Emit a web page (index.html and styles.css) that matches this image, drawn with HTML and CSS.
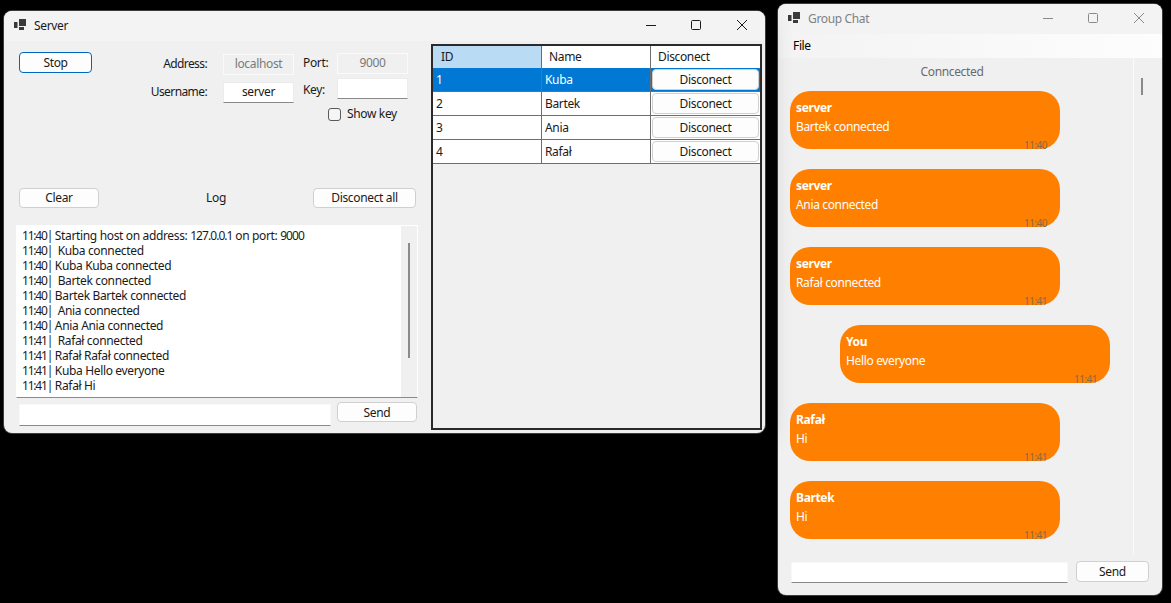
FILE: index.html
```html
<!DOCTYPE html>
<html>
<head>
	<title>Server / Group Chat</title>
	<meta charset="utf-8">
	<link rel="stylesheet" href="styles.css">
</head>

<body>

<svg class="defs" width="0" height="0">
	<symbol id="app-icon" viewBox="0 0 12 12">
		<rect x="0" y="3" width="3.5" height="6" />
		<rect x="5" y="0" width="7" height="7" />
		<rect x="5" y="8" width="5" height="3" />
	</symbol>
</svg>

<div class="window server">
	<div class="titlebar">
		<svg class="app-icon"><use href="#app-icon"></use></svg>
		<span class="title">Server</span>
		<div class="caption">
			<svg viewBox="0 0 46 30"><path d="M19 14.5h10" /></svg>
			<svg viewBox="0 0 46 30"><rect x="18.5" y="9.5" width="9" height="9" rx="1" /></svg>
			<svg viewBox="0 0 46 30"><path d="M18 9l10 10M28 9l-10 10" /></svg>
		</div>
	</div>
	<div class="server-body">
		<div class="left">
			<div class="top">
				<button class="btn btn-stop">Stop</button>
				<div class="labels">
					<label class="address-label">Address:</label>
					<label class="username-label">Username:</label>
				</div>
				<div class="inputs">
					<div class="input disabled">localhost</div>
					<div class="input server-name">server</div>
				</div>
				<div class="labels-2">
					<label>Port:</label>
					<label class="key-label">Key:</label>
				</div>
				<div class="inputs inputs-2">
					<div class="input disabled">9000</div>
					<div class="input key"></div>
					<div class="show-key"><span class="checkbox"></span>Show key</div>
				</div>
			</div>
			<div class="log-head">
				<button class="btn btn-clear">Clear</button>
				<span class="log-title">Log</span>
				<button class="btn btn-all">Disconect all</button>
			</div>
			<div class="log">
				<div class="log-text">
					<div><span class="stamp">11:40|</span> Starting host on address: <span class="num">127.0.0.1</span> on port: <span class="num">9000</span></div>
					<div><span class="stamp">11:40|</span>&nbsp; Kuba connected</div>
					<div><span class="stamp">11:40|</span> Kuba Kuba connected</div>
					<div><span class="stamp">11:40|</span>&nbsp; Bartek connected</div>
					<div><span class="stamp">11:40|</span> Bartek Bartek connected</div>
					<div><span class="stamp">11:40|</span>&nbsp; Ania connected</div>
					<div><span class="stamp">11:40|</span> Ania Ania connected</div>
					<div><span class="stamp">11:41|</span>&nbsp; Rafał connected</div>
					<div><span class="stamp">11:41|</span> Rafał Rafał connected</div>
					<div><span class="stamp">11:41|</span> Kuba Hello everyone</div>
					<div><span class="stamp">11:41|</span> Rafał Hi</div>
				</div>
				<div class="log-scroll"><span class="log-thumb"></span></div>
			</div>
			<div class="send-row">
				<div class="input send-input"></div>
				<button class="btn btn-send">Send</button>
			</div>
		</div>
		<div class="grid-wrap">
			<div class="grid">
				<div class="cell head active">ID</div>
				<div class="cell head">Name</div>
				<div class="cell head last">Disconect</div>

				<div class="cell selected">1</div>
				<div class="cell selected">Kuba</div>
				<div class="cell selected action"><button class="btn btn-row">Disconect</button></div>

				<div class="cell">2</div>
				<div class="cell">Bartek</div>
				<div class="cell action"><button class="btn btn-row">Disconect</button></div>

				<div class="cell">3</div>
				<div class="cell">Ania</div>
				<div class="cell action"><button class="btn btn-row">Disconect</button></div>

				<div class="cell">4</div>
				<div class="cell">Rafał</div>
				<div class="cell action"><button class="btn btn-row">Disconect</button></div>
			</div>
		</div>
	</div>
</div>

<div class="window chat">
	<div class="titlebar">
		<svg class="app-icon"><use href="#app-icon"></use></svg>
		<span class="title">Group Chat</span>
		<div class="caption">
			<svg viewBox="0 0 46 30"><path d="M19 14.5h10" /></svg>
			<svg viewBox="0 0 46 30"><rect x="18.5" y="9.5" width="9" height="9" rx="1" /></svg>
			<svg viewBox="0 0 46 30"><path d="M18 9l10 10M28 9l-10 10" /></svg>
		</div>
	</div>
	<div class="menubar">File</div>
	<div class="chat-main">
		<div class="messages">
			<div class="status">Conncected</div>
			<div class="bubble">
				<b>server</b>
				<span>Bartek connected</span>
				<time>11:40</time>
			</div>
			<div class="bubble">
				<b>server</b>
				<span>Ania connected</span>
				<time>11:40</time>
			</div>
			<div class="bubble">
				<b>server</b>
				<span>Rafał connected</span>
				<time>11:41</time>
			</div>
			<div class="bubble mine">
				<b>You</b>
				<span>Hello everyone</span>
				<time>11:41</time>
			</div>
			<div class="bubble">
				<b>Rafał</b>
				<span>Hi</span>
				<time>11:41</time>
			</div>
			<div class="bubble">
				<b>Bartek</b>
				<span>Hi</span>
				<time>11:41</time>
			</div>
		</div>
		<div class="chat-scroll"><span class="chat-thumb"></span></div>
	</div>
	<div class="chat-send">
		<div class="input chat-input"></div>
		<button class="btn btn-chat-send">Send</button>
	</div>
</div>

</body>
</html>
```

FILE: styles.css
```css
html, body {
	margin: 0;
	height: 100%;
	background: #000;
	overflow: hidden;
}
body {
	position: relative;
	font: 12px "Noto Sans", sans-serif;
	letter-spacing: -0.35px;
	color: #1a1a1a;
}
.defs {
	position: absolute;
}

/* windows sit on a free desktop */
.window {
	position: absolute;
	box-sizing: border-box;
	display: flex;
	flex-direction: column;
	background: #f0f0f0;
	border-radius: 8px;
	overflow: hidden;
	box-shadow: 0 0 0 1px #3c3c3c;
}
.server {
	left: 4px;
	top: 11px;
	z-index: 1;
	width: 761px;
	height: 422px;
	box-shadow: 0 0 0 1px #3c3c3c, 0 4px 26px rgba(0, 0, 0, 0.3);
}
.chat {
	left: 778px;
	top: 4px;
	width: 384px;
	height: 591px;
}

.titlebar {
	display: flex;
	align-items: center;
	flex: none;
	height: 30px;
	padding-left: 10px;
	background: #f3f3f3;
}
.app-icon {
	width: 12px;
	height: 12px;
	margin: -3px 8px 0 0;
	fill: #3a3a3a;
}
.title {
	padding-bottom: 2px;
}
.chat .title {
	color: #808080;
}
.caption {
	display: flex;
	margin-left: auto;
}
.caption svg {
	width: 46px;
	height: 30px;
	fill: none;
	stroke: #1a1a1a;
	stroke-width: 1;
}
.chat .caption svg {
	stroke: #8a8a8a;
}

/* server */
.server-body {
	flex: 1;
	display: flex;
	min-height: 0;
}
.left {
	width: 427px;
	flex: none;
	display: flex;
	flex-direction: column;
}
.top {
	display: flex;
	height: 146px;
	padding: 11px 0 0 15px;
	box-sizing: border-box;
}

.btn {
	flex: none;
	box-sizing: border-box;
	padding: 0;
	font: inherit;
	letter-spacing: inherit;
	color: #1a1a1a;
	background: #fdfdfd;
	border: 1px solid #d0d0d0;
	border-radius: 4px;
}
.btn-stop {
	width: 73px;
	height: 21px;
	border: 1px solid #0067c0;
}
.labels {
	width: 115px;
	text-align: right;
	flex: none;
}
.labels label {
	display: block;
	line-height: 18px;
	letter-spacing: -0.6px;
}
.address-label {
	margin-top: 3px;
}
.username-label {
	margin: 10px 0 0;
}
.inputs {
	width: 71px;
	margin-left: 16px;
	flex: none;
}
.input {
	box-sizing: border-box;
	height: 21px;
	line-height: 18px;
	text-align: center;
	background: #fff;
	border: 1px solid #ececec;
	border-bottom: 1px solid #8a8a8a;
}
.input.disabled {
	margin-top: 2px;
	color: #7a7a7a;
	background: #f0f0f0;
	border: 1px solid #fafafa;
}
.server-name {
	margin-top: 7px;
}
.labels-2 {
	width: 34px;
	margin-left: 9px;
	flex: none;
}
.labels-2 label {
	display: block;
	line-height: 18px;
	margin-top: 2px;
}
.labels-2 .key-label {
	margin-top: 9px;
}
.inputs-2 {
	margin-left: 0;
}
.inputs-2 .input.disabled {
	margin-top: 1px;
}
.key {
	margin-top: 4px;
}
.show-key {
	display: flex;
	align-items: center;
	margin: 6px 0 0 -9px;
	white-space: nowrap;
	line-height: 16px;
	padding-top: 1px;
}
.checkbox {
	box-sizing: border-box;
	width: 13px;
	height: 13px;
	margin-right: 6px;
	border: 1px solid #5a5a5a;
	border-radius: 3px;
	background: #f5f5f5;
}

.log-head {
	display: flex;
	align-items: center;
	height: 21px;
	padding-left: 15px;
}
.btn-clear {
	width: 80px;
	height: 20px;
}
.log-title {
	flex: none;
	box-sizing: border-box;
	width: 214px;
	padding-left: 20px;
	text-align: center;
}
.btn-all {
	width: 103px;
	height: 20px;
}

.log {
	display: flex;
	width: 402px;
	height: 173px;
	margin: 17px 0 0 12px;
	background: #fff;
	border: 1px solid #fff;
	border-bottom: 1px solid #8a8a8a;
	box-sizing: border-box;
}
.log-text {
	flex: 1;
	padding: 2px 0 0 5px;
	line-height: 15px;
}
.log-text .stamp {
	letter-spacing: -1.2px;
}
.log-text .num {
	letter-spacing: -0.95px;
}
.log-scroll {
	width: 16px;
	background: #f0f0f0;
	padding-left: 7px;
	box-sizing: border-box;
}
.log-thumb {
	display: block;
	width: 2px;
	height: 115px;
	margin-top: 17px;
	background: #8a8a8a;
}

.send-row {
	display: flex;
	margin: 4px 0 0 15px;
}
.send-input {
	width: 312px;
	height: 22px;
	margin-top: 2px;
	border-color: #f8f8f8 #f8f8f8 #8a8a8a;
}
.btn-send {
	width: 80px;
	height: 20px;
	margin-left: 6px;
}

.grid-wrap {
	padding: 3px 3px 3px 0;
	flex: 1;
	display: flex;
}
.grid {
	flex: 1;
	box-sizing: border-box;
	display: grid;
	grid-template-columns: 109px 109px 1fr;
	grid-template-rows: 22px;
	grid-auto-rows: 24px;
	border: 2px solid #2a2a2a;
}
.cell {
	box-sizing: border-box;
	display: flex;
	align-items: center;
	padding-left: 3px;
	background: #fff;
	border-right: 1px solid #6e6e6e;
	border-bottom: 1px solid #6e6e6e;
}
.cell.head {
	padding: 0 0 2px 7px;
	border-bottom: 0;
}
.cell.head.active {
	padding-left: 8px;
	background: #b9dbf3;
}
.cell.head.last,
.cell.action {
	border-right: 0;
}
.cell.selected {
	color: #fff;
	background: #0078d4;
}
.cell.action {
	padding: 1px;
}
.btn-row {
	width: 100%;
	height: 21px;
}

/* chat */
.menubar {
	flex: none;
	height: 24px;
	line-height: 24px;
	padding-left: 15px;
	color: #000;
	background: linear-gradient(to right, #f3f3f3, #fdfdfd);
}
.chat-main {
	flex: 1;
	display: flex;
	min-height: 0;
}
.messages {
	width: 356px;
	flex: none;
	box-sizing: border-box;
	display: flex;
	flex-direction: column;
	border-right: 1px solid #fafafa;
	overflow: hidden;
}
.status {
	flex: none;
	height: 33px;
	line-height: 27px;
	text-align: center;
	color: #6a6a6a;
	padding-right: 7px;
}
.bubble {
	position: relative;
	flex: none;
	box-sizing: border-box;
	display: flex;
	flex-direction: column;
	width: 270px;
	height: 58px;
	margin: 0 0 20px 12px;
	padding: 8px 0 0 6px;
	line-height: 17px;
	color: #fff;
	background: #ff8000;
	border-radius: 20px;
}
.bubble.mine {
	margin-left: 62px;
}
.bubble b {
	height: 19px;
}
.bubble time {
	position: absolute;
	right: 13px;
	bottom: -1px;
	font-size: 10px;
	line-height: 10px;
	letter-spacing: -0.5px;
	color: #8a6a45;
}
.chat-scroll {
	flex: 1;
	padding: 20px 0 0 7px;
}
.chat-thumb {
	display: block;
	width: 2px;
	height: 17px;
	background: #8a8a8a;
}
.chat-send {
	flex: none;
	height: 40px;
	display: flex;
	padding: 6px 0 0 13px;
	box-sizing: border-box;
}
.chat-input {
	width: 277px;
	height: 21px;
	margin-top: 1px;
	border-color: #f8f8f8 #f8f8f8 #8a8a8a;
}
.btn-chat-send {
	width: 73px;
	height: 21px;
	margin-left: 8px;
}
```
